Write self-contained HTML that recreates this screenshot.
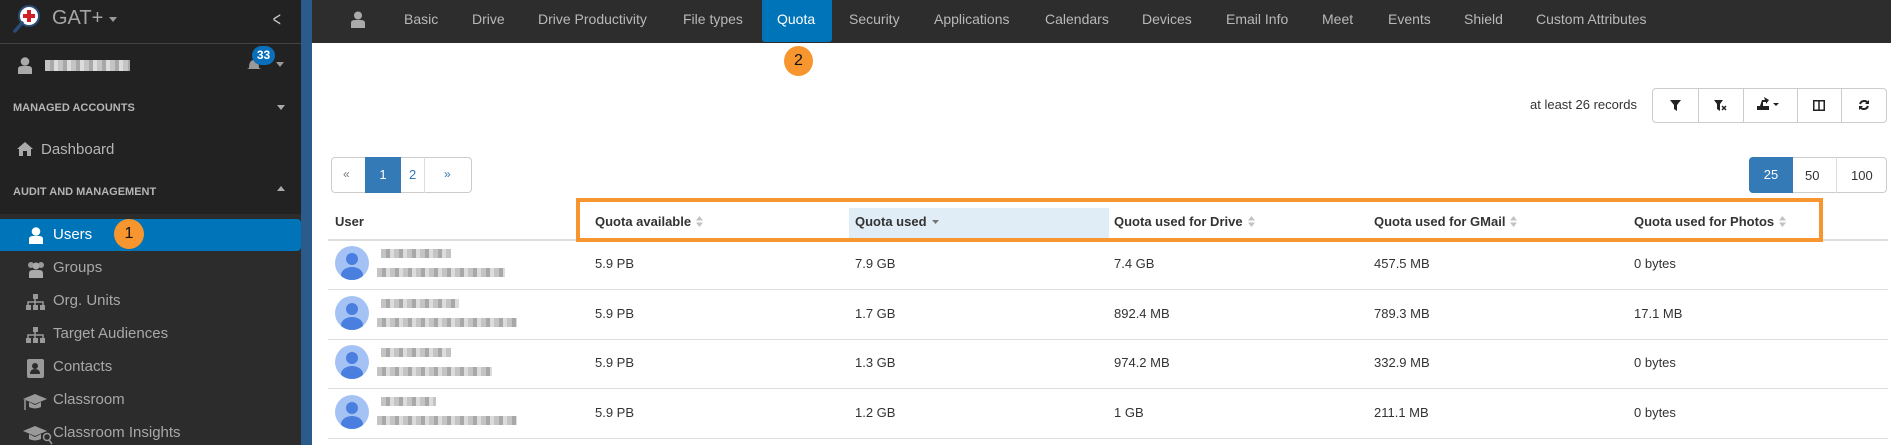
<!DOCTYPE html>
<html><head><meta charset="utf-8"><style>
*{margin:0;padding:0;box-sizing:border-box}
body{width:1891px;height:445px;overflow:hidden;background:#fff;font-family:"Liberation Sans",Arial,sans-serif;position:relative}
.a{position:absolute}
.sb{left:0;top:0;width:301px;height:445px;background:#222}
.strip{left:301px;top:0;width:11px;height:445px;background:#2a5b8a}
.nav{left:312px;top:0;width:1579px;height:43px;background:#2d2d2d}
.nt{top:11px;color:#b9b9b9;font-size:14px;white-space:nowrap}
.sl{color:#b5b5b5;font-size:11px;font-weight:bold;left:13px}
.si{color:#a8a8a8;font-size:15px;left:53px}
.th{top:214px;font-size:13px;font-weight:bold;color:#333;white-space:nowrap}
.td{font-size:13px;color:#333;white-space:nowrap}
.srt{display:inline-block;margin-left:5px;vertical-align:-1px}
.line{left:328px;width:1560px;height:1px;background:#ddd}
.av{left:335px;width:34px;height:34px;border-radius:50%;background:#a4c2f4;overflow:hidden}
.av:before{content:"";position:absolute;left:11px;top:7px;width:12px;height:12px;border-radius:50%;background:#4a7fe0}
.av:after{content:"";position:absolute;left:6px;top:21px;width:22px;height:16px;border-radius:50%;background:#4a7fe0}
.blur{background:repeating-linear-gradient(90deg,#c4c4c4 0 5px,#a8a8a8 5px 9px,#dcdcdc 9px 13px);height:9px}
.btn{border:1px solid #ccc;background:#fff}
</style></head><body>
<div class="a sb"></div>
<div class="a" style="left:0;top:214px;width:301px;height:231px;background:#2c2c2c"></div>
<div class="a" style="left:0;top:43px;width:301px;height:1px;background:#444"></div>
<svg class="a" style="left:12px;top:4px" width="30" height="30" viewBox="0 0 30 30"><circle cx="17" cy="12" r="10" fill="#fff" stroke="#2a4d77" stroke-width="2"/><rect x="15" y="6" width="4" height="12" fill="#d12027"/><rect x="11" y="10" width="12" height="4" fill="#d12027"/><line x1="10" y1="19" x2="3" y2="27" stroke="#2a4d77" stroke-width="3.5" stroke-linecap="round"/></svg>
<div class="a" style="left:52px;top:7px;color:#a5a5a5;font-size:20px">GAT+</div>
<div class="a" style="left:109px;top:17px;border:4px solid transparent;border-top:5px solid #999"></div>
<div class="a" style="left:271px;top:9px;color:#ccc;font-size:20px;transform:scaleX(.7)">&lt;</div>
<svg class="a" style="left:17px;top:57px" width="16" height="17" viewBox="0 0 16 17"><circle cx="8" cy="4.5" r="4.3" fill="#aaa"/><path d="M1 17 L1 12 Q1 9 5 9 L11 9 Q15 9 15 12 L15 17Z" fill="#aaa"/></svg>
<div class="a blur" style="left:45px;top:60px;width:85px;height:11px"></div>
<svg class="a" style="left:246px;top:57px" width="16" height="15" viewBox="0 0 16 15"><path d="M3 11 Q3 3 8 3 Q13 3 13 11 L15 12 L1 12Z" fill="#999"/></svg>
<div class="a" style="left:252px;top:46px;width:23px;height:19px;border-radius:10px;background:#0a6fba;color:#fff;font-size:12px;font-weight:bold;text-align:center;line-height:19px">33</div>
<div class="a" style="left:276px;top:62px;border:4px solid transparent;border-top:5px solid #999"></div>
<div class="a sl" style="top:102px">MANAGED ACCOUNTS</div>
<div class="a" style="left:277px;top:105px;border:4px solid transparent;border-top:5px solid #aaa"></div>
<svg class="a" style="left:16px;top:141px" width="18" height="15" viewBox="0 0 18 15"><path d="M9 1 L17 8 L15 8 L15 15 L11 15 L11 10 L7 10 L7 15 L3 15 L3 8 L1 8Z" fill="#aaa"/></svg>
<div class="a" style="left:41px;top:141px;color:#b5b5b5;font-size:15px">Dashboard</div>
<div class="a sl" style="top:186px">AUDIT AND MANAGEMENT</div>
<div class="a" style="left:277px;top:186px;border:4px solid transparent;border-bottom:5px solid #aaa;border-top:0"></div>
<div class="a" style="left:0;top:219px;width:301px;height:32px;background:#0074b8;border-radius:0 4px 4px 0"></div>
<svg class="a" style="left:28px;top:227px" width="16" height="17" viewBox="0 0 16 17"><circle cx="8" cy="4.5" r="4.3" fill="#fff"/><path d="M1 17 L1 12 Q1 9 5 9 L11 9 Q15 9 15 12 L15 17Z" fill="#fff"/></svg>
<div class="a" style="left:53px;top:226px;color:#fff;font-size:15px">Users</div>
<div class="a" style="left:114px;top:219px;width:30px;height:30px;border-radius:50%;background:#f7962e;color:#111;font-size:16px;text-align:center;line-height:30px">1</div>
<svg class="a" style="left:26px;top:261px" width="20" height="17" viewBox="0 0 20 17"><circle cx="5" cy="4" r="3" fill="#999"/><circle cx="15" cy="4" r="3" fill="#999"/><circle cx="10" cy="5" r="3.5" fill="#aaa"/><path d="M3 17 L3 12 Q3 9 7 9 L13 9 Q17 9 17 12 L17 17Z" fill="#aaa"/></svg>
<div class="a si" style="top:259px">Groups</div>
<svg class="a" style="left:26px;top:294px" width="19" height="16" viewBox="0 0 19 16"><rect x="7" y="0" width="5" height="5" fill="#999"/><rect x="0" y="11" width="5" height="5" fill="#999"/><rect x="7" y="11" width="5" height="5" fill="#999"/><rect x="14" y="11" width="5" height="5" fill="#999"/><path d="M9 5V11M2 11V8H17V11" stroke="#999" stroke-width="1.5" fill="none"/></svg>
<div class="a si" style="top:292px">Org. Units</div>
<svg class="a" style="left:26px;top:327px" width="19" height="16" viewBox="0 0 19 16"><rect x="7" y="0" width="5" height="5" fill="#999"/><rect x="0" y="11" width="5" height="5" fill="#999"/><rect x="7" y="11" width="5" height="5" fill="#999"/><rect x="14" y="11" width="5" height="5" fill="#999"/><path d="M9 5V11M2 11V8H17V11" stroke="#999" stroke-width="1.5" fill="none"/></svg>
<div class="a si" style="top:325px">Target Audiences</div>
<svg class="a" style="left:27px;top:359px" width="18" height="19" viewBox="0 0 18 19"><rect x="0" y="0" width="17" height="19" rx="2" fill="#999"/><circle cx="8" cy="7" r="3" fill="#2c2c2c"/><path d="M3 15 Q3 10 8 10 Q13 10 13 15Z" fill="#2c2c2c"/></svg>
<div class="a si" style="top:358px">Contacts</div>
<svg class="a" style="left:23px;top:393px" width="25" height="17" viewBox="0 0 25 17"><path d="M12 1 L24 6 L12 11 L0 6Z" fill="#999"/><path d="M6 9 L6 14 Q12 17 18 14 L18 9 L12 12Z" fill="#999"/><line x1="2" y1="7" x2="2" y2="17" stroke="#999" stroke-width="1.5"/></svg>
<div class="a si" style="top:391px">Classroom</div>
<svg class="a" style="left:23px;top:425px" width="30" height="20" viewBox="0 0 30 20"><path d="M12 1 L24 6 L12 11 L0 6Z" fill="#999"/><path d="M6 9 L6 14 Q12 17 18 14 L18 9 L12 12Z" fill="#999"/><circle cx="24" cy="12" r="3.5" stroke="#999" stroke-width="1.5" fill="none"/><line x1="26" y1="15" x2="29" y2="19" stroke="#999" stroke-width="1.5"/></svg>
<div class="a si" style="top:424px">Classroom Insights</div>

<div class="a strip"></div>
<div class="a nav"></div>
<svg class="a" style="left:351px;top:11px" width="14" height="17" viewBox="0 0 14 17"><circle cx="7" cy="4.5" r="4" fill="#aaa"/><path d="M0 17 L0 12 Q0 9 4 9 L10 9 Q14 9 14 12 L14 17Z" fill="#aaa"/></svg>
<div class="a nt" style="left:404px">Basic</div>
<div class="a nt" style="left:472px">Drive</div>
<div class="a nt" style="left:538px">Drive Productivity</div>
<div class="a nt" style="left:683px">File types</div>
<div class="a" style="left:762px;top:0;width:70px;height:42px;background:#0074b8;border-radius:0 0 3px 3px"></div>
<div class="a nt" style="left:777px;color:#fff">Quota</div>
<div class="a nt" style="left:849px">Security</div>
<div class="a nt" style="left:934px">Applications</div>
<div class="a nt" style="left:1045px">Calendars</div>
<div class="a nt" style="left:1142px">Devices</div>
<div class="a nt" style="left:1226px">Email Info</div>
<div class="a nt" style="left:1322px">Meet</div>
<div class="a nt" style="left:1388px">Events</div>
<div class="a nt" style="left:1464px">Shield</div>
<div class="a nt" style="left:1536px">Custom Attributes</div>
<div class="a" style="left:784px;top:46px;width:29px;height:30px;border-radius:50%;background:#f7962e;color:#111;font-size:16px;text-align:center;line-height:30px">2</div>

<div class="a" style="left:1530px;top:97px;font-size:13px;color:#333">at least 26 records</div>
<div class="a btn" style="left:1652px;top:88px;width:235px;height:35px;border-radius:4px"></div>
<div class="a" style="left:1698px;top:88px;width:1px;height:35px;background:#ccc"></div>
<div class="a" style="left:1743px;top:88px;width:1px;height:35px;background:#ccc"></div>
<div class="a" style="left:1797px;top:88px;width:1px;height:35px;background:#ccc"></div>
<div class="a" style="left:1841px;top:88px;width:1px;height:35px;background:#ccc"></div>
<svg class="a" style="left:1670px;top:100px" width="11" height="11" viewBox="0 0 11 11"><path d="M0 0H11L7 5V11L4 9V5Z" fill="#222"/></svg>
<svg class="a" style="left:1714px;top:100px" width="14" height="11" viewBox="0 0 14 11"><path d="M0 0H9L6 4V11L3 9V4Z" fill="#222"/><path d="M8 6L12 10M12 6L8 10" stroke="#222" stroke-width="1.5"/></svg>
<svg class="a" style="left:1757px;top:97px" width="26" height="14" viewBox="0 0 26 14"><rect x="0" y="9" width="12" height="4" fill="#222"/><path d="M3 9L5 3L8 3L7 0L12 3L9 7L9 5L6 5L6 9Z" fill="#222"/><path d="M16 6H22L19 9Z" fill="#222"/></svg>
<svg class="a" style="left:1813px;top:100px" width="12" height="11" viewBox="0 0 12 11"><rect x="0.75" y="0.75" width="10.5" height="9.5" fill="none" stroke="#222" stroke-width="1.5"/><line x1="6" y1="0" x2="6" y2="11" stroke="#222" stroke-width="1.5"/></svg>
<svg class="a" style="left:1858px;top:99px" width="12" height="12" viewBox="0 0 12 12"><path d="M10 4A4.5 4.5 0 0 0 2 5M2 8A4.5 4.5 0 0 0 10 7" stroke="#222" stroke-width="2" fill="none"/><path d="M11 1V5H7Z M1 11V7H5Z" fill="#222"/></svg>

<div class="a btn" style="left:331px;top:157px;width:141px;height:36px;border-radius:4px"></div>
<div class="a" style="left:365px;top:157px;width:36px;height:36px;background:#337ab7;color:#fff;font-size:13px;text-align:center;line-height:36px">1</div>
<div class="a" style="left:424px;top:157px;width:1px;height:36px;background:#ddd"></div>
<div class="a" style="left:343px;top:167px;font-size:12px;color:#777">«</div>
<div class="a" style="left:409px;top:167px;font-size:13px;color:#337ab7">2</div>
<div class="a" style="left:444px;top:167px;font-size:12px;color:#337ab7">»</div>
<div class="a btn" style="left:1749px;top:157px;width:138px;height:36px;border-radius:4px"></div>
<div class="a" style="left:1749px;top:157px;width:44px;height:36px;background:#337ab7;border-radius:4px 0 0 4px;color:#fff;font-size:13px;text-align:center;line-height:36px">25</div>
<div class="a" style="left:1836px;top:157px;width:1px;height:36px;background:#ddd"></div>
<div class="a" style="left:1805px;top:168px;font-size:13px;color:#333">50</div>
<div class="a" style="left:1851px;top:168px;font-size:13px;color:#333">100</div>

<div class="a" style="left:849px;top:208px;width:260px;height:31px;background:#e1edf6"></div>
<div class="a" style="left:328px;top:239px;width:1560px;height:2px;background:#ddd"></div>
<div class="a th" style="left:335px">User</div>
<div class="a th" style="left:595px">Quota available<svg class="srt" width="7" height="11" viewBox="0 0 7 11"><path d="M0 4.5L3.5 0L7 4.5ZM0 6.5L3.5 11L7 6.5Z" fill="#c2c2c2"/></svg></div>
<div class="a th" style="left:855px">Quota used<svg class="srt" width="7" height="11" viewBox="0 0 7 11"><path d="M0 4L3.5 8L7 4Z" fill="#777"/></svg></div>
<div class="a th" style="left:1114px">Quota used for Drive<svg class="srt" width="7" height="11" viewBox="0 0 7 11"><path d="M0 4.5L3.5 0L7 4.5ZM0 6.5L3.5 11L7 6.5Z" fill="#c2c2c2"/></svg></div>
<div class="a th" style="left:1374px">Quota used for GMail<svg class="srt" width="7" height="11" viewBox="0 0 7 11"><path d="M0 4.5L3.5 0L7 4.5ZM0 6.5L3.5 11L7 6.5Z" fill="#c2c2c2"/></svg></div>
<div class="a th" style="left:1634px">Quota used for Photos<svg class="srt" width="7" height="11" viewBox="0 0 7 11"><path d="M0 4.5L3.5 0L7 4.5ZM0 6.5L3.5 11L7 6.5Z" fill="#c2c2c2"/></svg></div>
<div class="a" style="left:576px;top:198px;width:1247px;height:44px;border:4px solid #f7962e"></div>

<div class="a line" style="top:289px"></div>
<div class="a line" style="top:339px"></div>
<div class="a line" style="top:388px"></div>
<div class="a line" style="top:438px"></div>

<div class="a av" style="left:335px;top:246px"></div>
<div class="a av" style="left:335px;top:296px"></div>
<div class="a av" style="left:335px;top:345px"></div>
<div class="a av" style="left:335px;top:395px"></div>
<div class="a blur" style="left:381px;top:249px;width:70px"></div><div class="a blur" style="left:377px;top:268px;width:128px"></div>
<div class="a blur" style="left:381px;top:299px;width:78px"></div><div class="a blur" style="left:377px;top:318px;width:140px"></div>
<div class="a blur" style="left:381px;top:348px;width:70px"></div><div class="a blur" style="left:377px;top:367px;width:115px"></div>
<div class="a blur" style="left:381px;top:397px;width:55px"></div><div class="a blur" style="left:377px;top:416px;width:140px"></div>

<div class="a td" style="left:595px;top:256px">5.9 PB</div><div class="a td" style="left:855px;top:256px">7.9 GB</div><div class="a td" style="left:1114px;top:256px">7.4 GB</div><div class="a td" style="left:1374px;top:256px">457.5 MB</div><div class="a td" style="left:1634px;top:256px">0 bytes</div>
<div class="a td" style="left:595px;top:306px">5.9 PB</div><div class="a td" style="left:855px;top:306px">1.7 GB</div><div class="a td" style="left:1114px;top:306px">892.4 MB</div><div class="a td" style="left:1374px;top:306px">789.3 MB</div><div class="a td" style="left:1634px;top:306px">17.1 MB</div>
<div class="a td" style="left:595px;top:355px">5.9 PB</div><div class="a td" style="left:855px;top:355px">1.3 GB</div><div class="a td" style="left:1114px;top:355px">974.2 MB</div><div class="a td" style="left:1374px;top:355px">332.9 MB</div><div class="a td" style="left:1634px;top:355px">0 bytes</div>
<div class="a td" style="left:595px;top:405px">5.9 PB</div><div class="a td" style="left:855px;top:405px">1.2 GB</div><div class="a td" style="left:1114px;top:405px">1 GB</div><div class="a td" style="left:1374px;top:405px">211.1 MB</div><div class="a td" style="left:1634px;top:405px">0 bytes</div>
</body></html>
